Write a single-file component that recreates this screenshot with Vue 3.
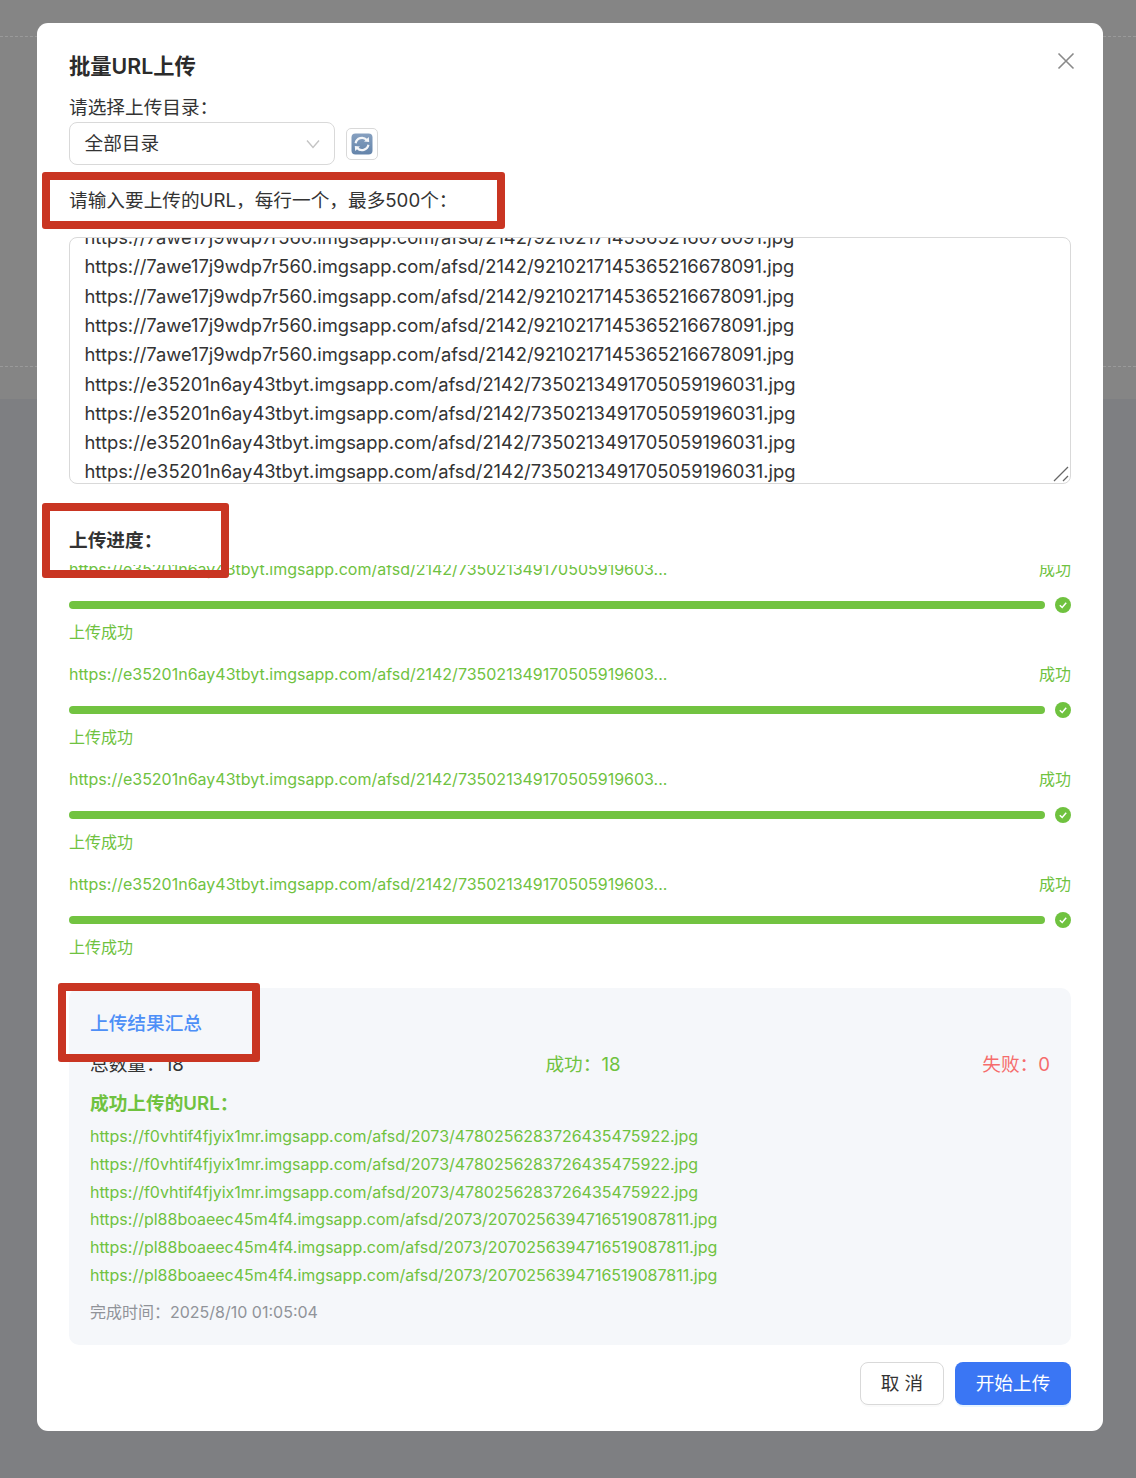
<script setup>
const a = 'https://7awe17j9wdp7r560.imgsapp.com/afsd/2142/921021714536521667809' + '1.jpg'
const b = 'https://e35201n6ay43tbyt.imgsapp.com/afsd/2142/735021349170505919603' + '1.jpg'
const inputLines = [a, a, a, a, a, b, b, b, b]
const progressItems = [1, 2, 3, 4].map((id) => ({
  id,
  url: 'https://e35201n6ay43tbyt.imgsapp.com/afsd/2142/735021349170505919603...',
}))
const f = 'https://f0vhtif4fjyix1mr.imgsapp.com/afsd/2073/478025628372643547592' + '2.jpg'
const p = 'https://pl88boaeec45m4f4.imgsapp.com/afsd/2073/207025639471651908781' + '1.jpg'
const links = [f, f, f, p, p, p]
</script>

<template>
  <div class="page">
    <div class="backdrop">
      <div class="dash dash-top"></div>
      <div class="dash dash-bottom"></div>
      <div class="lower"></div>
    </div>
    <section class="dialog">
      <button class="close" aria-label="关闭">
        <svg width="20" height="20" viewBox="0 0 20 20"><path d="M2.5 2.5 17.5 17.5M17.5 2.5 2.5 17.5" stroke="#8a8a8a" stroke-width="1.6" fill="none" /></svg>
      </button>
      <h2 class="title">批量URL上传</h2>
      <div class="label first">请选择上传目录：</div>
      <div class="select-row">
        <div class="select">
          <span class="select-text">全部目录</span>
          <svg width="16" height="12" viewBox="0 0 16 12"><path d="M2 2.5 8 9.5 14 2.5" stroke="#c4c4c4" stroke-width="1.4" fill="none" /></svg>
        </div>
        <button class="refresh" aria-label="刷新">
          <svg width="22" height="22" viewBox="0 0 22 22">
            <defs>
              <linearGradient id="rf" x1="0" y1="0" x2="0" y2="1">
                <stop offset="0" stop-color="#86a0c0" />
                <stop offset="1" stop-color="#6484aa" />
              </linearGradient>
            </defs>
            <rect x="0.5" y="0.5" width="21" height="21" rx="4" fill="url(#rf)" />
            <path d="M4.6 10.2A6.5 6.5 0 0 1 15.8 7" stroke="#f4f6f9" stroke-width="2.2" fill="none" />
            <path d="M13 8.6 18.2 9 17.8 4Z" fill="#f4f6f9" />
            <path d="M17.4 11.8A6.5 6.5 0 0 1 6.2 15" stroke="#f4f6f9" stroke-width="2.2" fill="none" />
            <path d="M9 13.4 3.8 13 4.2 18Z" fill="#f4f6f9" />
          </svg>
        </button>
      </div>
      <div class="label second">请输入要上传的URL，每行一个，最多500个：</div>
      <div class="textarea">
        <div class="lines">
          <div v-for="(line, i) in inputLines" :key="i">{{ line }}</div>
        </div>
        <svg class="grip" width="16" height="16" viewBox="0 0 16 16"><path d="M1 15 15 1M10 15 15 10" stroke="#666" stroke-width="1.3" fill="none" /></svg>
      </div>

      <div class="label progress-title">上传进度：</div>
      <div class="progress-list">
        <div class="progress-inner">
          <div v-for="item in progressItems" :key="item.id" class="item">
            <div class="item-head">
              <span>{{ item.url }}</span>
              <span>成功</span>
            </div>
            <div class="bar-row">
              <div class="bar"></div>
              <svg width="16" height="16" viewBox="0 0 16 16">
                <circle cx="8" cy="8" r="8" fill="#6fc23f" />
                <path d="M4.8 8.2 7.2 10.5 11.2 5.8" stroke="#fff" stroke-width="1.5" fill="none" />
              </svg>
            </div>
            <div class="item-msg">上传成功</div>
          </div>
        </div>
      </div>

      <div class="summary">
        <div class="summary-title">上传结果汇总</div>
        <div class="counts">
          <span>总数量：18</span>
          <span class="ok">成功：18</span>
          <span class="fail">失败：0</span>
        </div>
        <div class="ok-title">成功上传的URL：</div>
        <div class="links">
          <div v-for="(link, i) in links" :key="i">{{ link }}</div>
        </div>
        <div class="time">完成时间：2025/8/10 01:05:04</div>
      </div>

      <div class="footer">
        <button class="btn cancel">取 消</button>
        <button class="btn primary">开始上传</button>
      </div>

      <div class="mark mark-input"></div>
      <div class="mark mark-progress"></div>
      <div class="mark mark-summary"></div>
    </section>
  </div>
</template>

<style scoped>
.page {
  position: relative;
  width: 1136px;
  height: 1478px;
  overflow: hidden;
  padding-top: 23px;
  box-sizing: border-box;
  font-family: Inter, "Noto Sans CJK SC", sans-serif;
  font-size: 18.67px;
  color: #333;
}
.backdrop {
  position: absolute;
  inset: 0;
  background: #858585;
}
.lower {
  position: absolute;
  left: 0;
  right: 0;
  top: 399px;
  bottom: 0;
  background: #7e7f82;
}
.dash {
  position: absolute;
  left: 0;
  right: 0;
  border-top: 1px dashed #9a9a9a;
}
.dash-top { top: 36px; }
.dash-bottom { top: 366px; }
.dialog {
  position: relative;
  width: 1066px;
  margin-left: 37px;
  box-sizing: border-box;
  padding: 29px 32px 26px;
  background: #fff;
  border-radius: 11px;
}
.close {
  position: absolute;
  right: 27px;
  top: 28px;
  width: 20px;
  height: 20px;
  padding: 0;
  border: 0;
  background: none;
}
.close svg { display: block; }
.title {
  margin: 0;
  font-size: 21.3px;
  font-weight: 600;
  line-height: 28px;
  color: #2b2b2b;
}
.label { line-height: 28px; }
.first { margin-top: 14px; }
.second { margin-top: 22px; margin-bottom: 22px; }
.select-row {
  display: flex;
  align-items: center;
  gap: 11px;
  height: 43px;
}
.select {
  display: flex;
  align-items: center;
  justify-content: space-between;
  width: 266px;
  height: 43px;
  box-sizing: border-box;
  padding: 0 13px 0 14.5px;
  border: 1px solid #d9d9d9;
  border-radius: 8px;
}
.select-text { padding-bottom: 4px; }
.refresh {
  display: flex;
  align-items: center;
  justify-content: center;
  width: 32px;
  height: 32px;
  padding: 0;
  background: #fff;
  border: 1px solid #d9d9d9;
  border-radius: 5px;
}
.textarea {
  position: relative;
  height: 247px;
  box-sizing: border-box;
  border: 1px solid #d9d9d9;
  border-radius: 8px;
  overflow: hidden;
  padding-left: 14.5px;
}
.lines {
  margin-top: -14.9px;
  font-size: 18.36px;
  line-height: 29.3px;
  white-space: nowrap;
}
.grip {
  position: absolute;
  right: 1px;
  bottom: 1px;
}
.progress-title {
  margin-top: 43px;
  font-weight: 600;
}
.progress-list {
  height: 396px;
  margin-top: 10px;
  overflow: hidden;
  color: #6fc23f;
}
.progress-inner { margin-top: -10px; }
.item { padding-bottom: 14.1px; }
.item-head {
  display: flex;
  justify-content: space-between;
  line-height: 28px;
  font-size: 16px;
}
.bar-row {
  display: flex;
  align-items: center;
  gap: 10px;
  height: 16px;
  margin-top: 14px;
}
.bar {
  flex: 1;
  height: 8px;
  border-radius: 4px;
  background: #72c341;
}
.item-msg {
  margin-top: 5px;
  line-height: 28px;
  font-size: 16px;
}
.summary {
  margin-top: 27px;
  padding: 22px 21px 19px;
  background: #f5f7fa;
  border-radius: 10px;
}
.summary-title {
  line-height: 28px;
  color: #4d8ff7;
  font-weight: 500;
}
.counts {
  display: flex;
  justify-content: space-between;
  margin-top: 13px;
  line-height: 28px;
}
.ok { color: #6fc23f; }
.fail { color: #f56c6c; }
.ok-title {
  margin-top: 11px;
  line-height: 28px;
  font-weight: 600;
  color: #6fc23f;
}
.links {
  margin-top: 5px;
  font-size: 16px;
  line-height: 27.8px;
  color: #6fc23f;
  white-space: nowrap;
}
.time {
  margin-top: 8px;
  line-height: 28px;
  font-size: 16px;
  color: #909399;
}
.footer {
  display: flex;
  justify-content: flex-end;
  gap: 11px;
  margin-top: 17px;
}
.btn {
  height: 43px;
  border-radius: 8px;
  font: inherit;
  padding: 0 0 3px;
}
.cancel {
  width: 84px;
  background: #fff;
  border: 1px solid #d9d9d9;
  color: #333;
  box-shadow: 0 2px 0 rgba(0, 0, 0, 0.02);
}
.primary {
  width: 116px;
  background: #3a76f4;
  border: 0;
  color: #fff;
  box-shadow: 0 2px 0 rgba(5, 145, 255, 0.1);
}
.mark {
  position: absolute;
  box-sizing: border-box;
  border: 8px solid #c93522;
  border-radius: 3px;
}
.mark-input { left: 5px; top: 149px; width: 463px; height: 57px; }
.mark-progress { left: 5px; top: 480px; width: 187px; height: 75px; }
.mark-summary { left: 21px; top: 960px; width: 202px; height: 79px; }
</style>
